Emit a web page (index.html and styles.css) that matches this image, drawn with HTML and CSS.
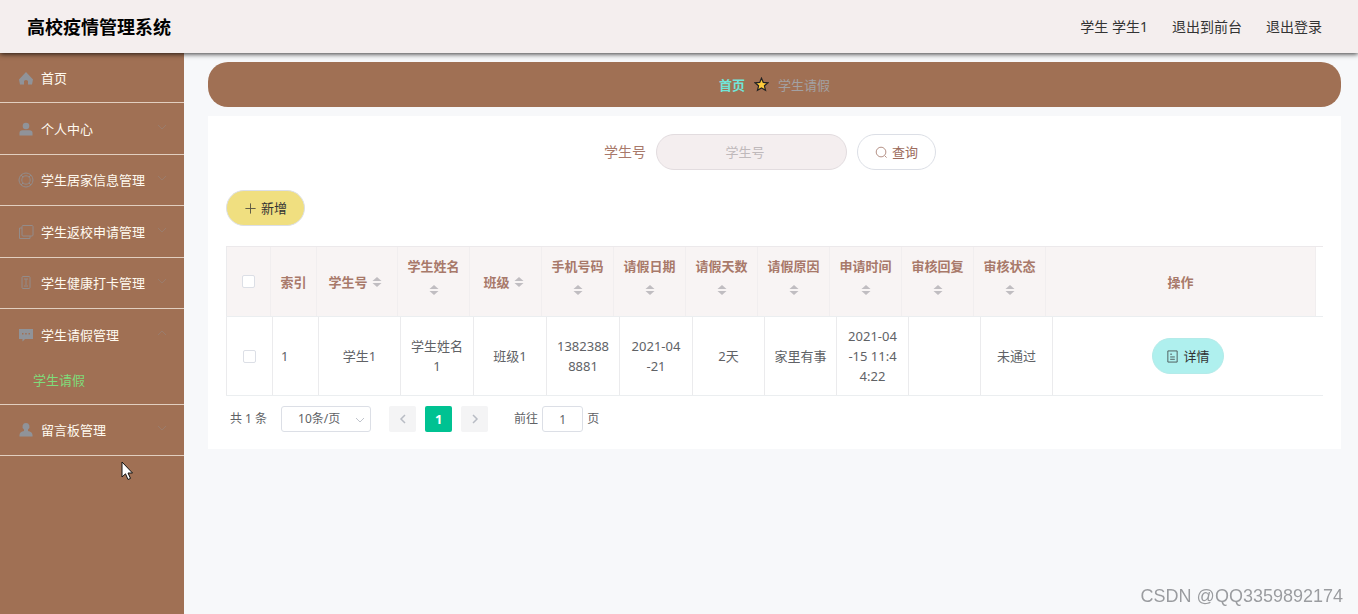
FILE: index.html
```html
<!DOCTYPE html>
<html lang="zh-CN">
<head>
<meta charset="utf-8">
<meta name="viewport" content="width=device-width, initial-scale=1">
<title>高校疫情管理系统</title>
<link rel="stylesheet" href="styles.css">
</head>
<body>
<svg class="defs" aria-hidden="true">
  <symbol id="down" viewBox="0 0 12 12"><path d="M2 4l4 4 4-4" fill="none" stroke="currentColor"/></symbol>
  <symbol id="user" viewBox="0 0 16 16"><circle cx="8" cy="5" r="3.300"/><path d="M1.500 14.500v-2.500q0-2.800 3-2.800h7q3 0 3 2.800v2.500z"/></symbol>
  <symbol id="sort" viewBox="0 0 10 12"><path d="M5 1l4.500 4h-9zM5 11L.5 7h9z" fill="currentColor"/></symbol>
</svg>
<header class="topbar">
  <h1 class="brand">高校疫情管理系统</h1>
  <nav class="account">
    <span>学生 学生1</span>
    <a href="#front">退出到前台</a>
    <a href="#logout">退出登录</a>
  </nav>
</header>
<div class="layout">
  <aside class="sidebar">
    <ul class="menu">
      <li><a class="menu-link" href="#home"><svg class="menu-icon" viewBox="0 0 16 16"><path d="M8 2L1 9.500 2 14.500h4V11q2-2 4 0v3.500h4l1-5z"/></svg>首页</a></li>
      <li><a class="menu-link" href="#me"><svg class="menu-icon"><use href="#user"/></svg>个人中心<svg class="arrow"><use href="#down"/></svg></a></li>
      <li><a class="menu-link" href="#family"><svg class="menu-icon line" viewBox="0 0 16 16"><circle cx="8" cy="8" r="7"/><circle cx="8" cy="8" r="4.200"/><path d="M3 3l2 2M13 3l-2 2M3 13l2-2M13 13l-2-2"/></svg>学生居家信息管理<svg class="arrow"><use href="#down"/></svg></a></li>
      <li><a class="menu-link" href="#return"><svg class="menu-icon line" viewBox="0 0 16 16"><rect x="4" y="1.500" width="11" height="10.500" rx="1"/><path d="M4 4H1.500v10.500H12V12"/></svg>学生返校申请管理<svg class="arrow"><use href="#down"/></svg></a></li>
      <li><a class="menu-link" href="#health"><svg class="menu-icon line" viewBox="0 0 16 16"><rect x="4" y="1.500" width="8" height="12" rx="1"/><path d="M6 4h4M8 4v6M6 11h4"/></svg>学生健康打卡管理<svg class="arrow"><use href="#down"/></svg></a></li>
      <li><a class="menu-link" href="#leave"><svg class="menu-icon" viewBox="0 0 16 16"><path d="M1 2h14v10H7l-2.500 2.500V12H1zM4 6v1.500h1.500V6zM7.200 6v1.500h1.500V6zM10.500 6v1.500H12V6z" fill-rule="evenodd"/></svg>学生请假管理<svg class="arrow open"><use href="#down"/></svg></a>
        <a class="submenu-link" href="#leave-list">学生请假</a></li>
      <li><a class="menu-link" href="#board"><svg class="menu-icon" viewBox="0 0 16 16"><path d="M8 1a3.500 3.500 0 0 1 2 6.400V9c2.500.6 4.500 1.500 4.500 4v1.500h-13V13c0-2.500 2-3.400 4.500-4V7.400A3.500 3.500 0 0 1 8 1z"/></svg>留言板管理<svg class="arrow"><use href="#down"/></svg></a></li>
    </ul>
  </aside>
  <main class="content">
    <nav class="breadcrumb" aria-label="breadcrumb">
      <a href="#home">首页</a>
      <svg class="star" viewBox="0 0 16 16"><path d="M8 1.300l1.900 4.500 4.900.4-3.700 3.200 1.200 4.800L8 11.600l-4.300 2.600 1.200-4.800L1.200 6.200l4.900-.4z"/></svg>
      <span>学生请假</span>
    </nav>
    <section class="card">
      <form class="search">
        <label for="number">学生号</label>
        <input class="search-input" id="number" type="text" placeholder="学生号">
        <button class="button" type="button"><svg class="button-icon" viewBox="0 0 14 14"><circle cx="6.500" cy="6.500" r="5.200"/><path d="M10.500 10.500l2 2"/></svg>查询</button>
      </form>
      <div class="actions">
        <button class="button add" type="button"><svg class="button-icon" viewBox="0 0 14 14"><path d="M7 1.500v11M1.500 7h11"/></svg>新增</button>
      </div>
      <table class="records">
        <thead>
          <tr>
            <th><input class="check" type="checkbox" aria-label="全选"></th>
            <th>索引</th>
            <th>学生号<svg class="sort"><use href="#sort"/></svg></th>
            <th class="stacked">学生姓名<svg class="sort"><use href="#sort"/></svg></th>
            <th>班级<svg class="sort"><use href="#sort"/></svg></th>
            <th class="stacked">手机号码<svg class="sort"><use href="#sort"/></svg></th>
            <th class="stacked">请假日期<svg class="sort"><use href="#sort"/></svg></th>
            <th class="stacked">请假天数<svg class="sort"><use href="#sort"/></svg></th>
            <th class="stacked">请假原因<svg class="sort"><use href="#sort"/></svg></th>
            <th class="stacked">申请时间<svg class="sort"><use href="#sort"/></svg></th>
            <th class="stacked">审核回复<svg class="sort"><use href="#sort"/></svg></th>
            <th class="stacked">审核状态<svg class="sort"><use href="#sort"/></svg></th>
            <th>操作</th>
          </tr>
        </thead>
        <tbody>
          <tr>
            <td><input class="check" type="checkbox" aria-label="选择第1行"></td>
            <td class="index">1</td>
            <td>学生1</td>
            <td>学生姓名<br>1</td>
            <td>班级1</td>
            <td>1382388<br>8881</td>
            <td>2021-04<br>-21</td>
            <td>2天</td>
            <td>家里有事</td>
            <td>2021-04<br>-15 11:4<br>4:22</td>
            <td></td>
            <td>未通过</td>
            <td><button class="button detail" type="button"><svg class="button-icon" viewBox="0 0 14 14"><path d="M2 1h10v12H2zM4.500 4.500h2M4.500 7.500h5M4.500 10h5"/></svg>详情</button></td>
          </tr>
        </tbody>
      </table>
      <div class="pagination">
        <span>共 1 条</span>
        <span class="size">
          <select class="size-select" aria-label="每页条数"><option>10条/页</option></select>
          <svg class="size-arrow"><use href="#down"/></svg>
        </span>
        <div class="pages">
          <button class="page" type="button" aria-label="上一页"><svg class="page-icon prev"><use href="#down"/></svg></button>
          <button class="page current" type="button">1</button>
          <button class="page" type="button" aria-label="下一页"><svg class="page-icon next"><use href="#down"/></svg></button>
        </div>
        <div class="jump"><label for="page">前往</label><input class="jump-input" id="page" type="text" value="1"><span>页</span></div>
      </div>
    </section>
  </main>
</div>
<svg class="cursor" viewBox="0 0 12 20" aria-hidden="true"><path d="M1 1v15l3.500-3.200L7 18.500l2.500-1.100L7 12h4.500z"/></svg>
<div class="watermark">CSDN @QQ3359892174</div>
</body>
</html>
```

FILE: styles.css
```css
* { box-sizing: border-box; }

body {
  margin: 0;
  min-height: 100vh;
  display: flex;
  flex-direction: column;
  background: #f7f8fa;
  color: #606266;
  font: 13px/20px "Noto Sans", "Noto Sans CJK SC", sans-serif;
}

a { color: inherit; text-decoration: none; }
button, input, select { font: inherit; color: inherit; margin: 0; }
.defs { position: absolute; width: 0; height: 0; }

.topbar {
  position: relative;
  z-index: 1;
  display: flex;
  align-items: center;
  justify-content: space-between;
  height: 53px;
  padding: 0 36px 0 27px;
  background: #f4eeee;
  box-shadow: 0 1px 5px rgba(0, 0, 0, 0.8);
}
.brand { margin: 0; color: #000; font-size: 18px; font-weight: 700; }
.account { display: flex; gap: 24px; color: #333; font-size: 14px; }

.layout { flex: 1; display: flex; }
.sidebar { flex: 0 0 184px; background: #a07054; }
.menu { margin: 0; padding: 0; list-style: none; color: #fffaf0; }
.menu li { border-bottom: 1px solid #e2cfc0; }
.menu-link { display: flex; align-items: center; height: 50px; padding: 0 16px 0 18px; }
.menu li:first-child .menu-link { height: 49px; }
.menu li:nth-child(even) .menu-link { height: 51px; }
.menu-icon { width: 16px; height: 16px; margin-right: 7px; fill: #909399; }
.menu-icon.line { fill: none; stroke: #909399; opacity: 0.8; }
.arrow { width: 12px; height: 12px; margin: 0 0 4px auto; color: #909399; opacity: 0.35; }
.arrow.open { transform: rotate(180deg); }
.submenu-link { display: block; padding: 10px 33px 14px; color: #7fdc7a; }

.content { flex: 1; min-width: 0; padding: 9px 17px 0 24px; }
.breadcrumb {
  display: flex;
  align-items: center;
  justify-content: center;
  gap: 9px;
  height: 45px;
  margin-bottom: 9px;
  border-radius: 20px;
  background: #a07054;
  color: #a3a1a3;
}
.breadcrumb a { color: #71e5d8; font-weight: 700; }
.star { width: 15px; height: 15px; fill: #fdcb3c; stroke: #222; stroke-width: 1.3; }

.card { padding: 18px 18px 17px; background: #fff; }
.search { display: flex; align-items: center; justify-content: center; gap: 10px; padding-right: 9px; }
.search label { color: #a8796a; font-size: 14px; }
.search-input {
  width: 191px;
  height: 36px;
  padding: 0 28px 0 15px;
  border: 1px solid #e2dcdf;
  border-radius: 18px;
  background: #f4eeef;
  text-align: center;
}
.search-input::placeholder { color: #bfb9bb; opacity: 1; }
.button {
  display: inline-flex;
  align-items: center;
  justify-content: center;
  gap: 4px;
  height: 36px;
  padding: 0 17px;
  border: 1px solid #dcdfe6;
  border-radius: 18px;
  background: #fff;
  color: #9c6b5c;
}
.button-icon { width: 13px; height: 13px; fill: none; stroke: currentColor; opacity: 0.8; }
.actions { margin: 20px 0; display: flex; }
.add { background: #f0df80; color: #333; }
.detail { padding: 0 13px; border-color: #b4ebe9; background: #aff0ee; color: #333; }

.records { display: block; border-top: 1px solid #ece9eb; }
.records thead, .records tbody { display: block; border-bottom: 1px solid #ebeef0; }
.records tr { display: grid; border-left: 1px solid #ebebed; }
.records thead { padding-right: 7px; }
.records thead tr { grid-template-columns: 44fr 46fr 81fr repeat(9, 72fr) 270fr; }
.records tbody tr { grid-template-columns: 46fr 46fr 82fr repeat(4, 73fr) repeat(5, 72fr) 270fr; }
.records th, .records td {
  display: flex;
  align-items: center;
  justify-content: center;
  min-width: 0;
  padding: 8px;
  border-right: 1px solid #ebebed;
  text-align: center;
}
.records th {
  flex-wrap: wrap;
  align-content: center;
  min-height: 69px;
  padding: 8px 4px;
  border-color: #f1eeef;
  background: #f8f4f4;
  color: #a8796a;
  line-height: 24px;
}
.records .stacked { padding: 4px 4px 12px; }
.records td { min-height: 78px; }
.records td:last-child { border-right: 0; }
.records .index { justify-content: flex-start; }
.sort { flex: 0 0 10px; height: 12px; margin: 6px 4px; color: #c0bdc1; }
.check {
  appearance: none;
  width: 13px;
  height: 13px;
  border: 1px solid #dcdfe6;
  border-radius: 2px;
  background: #fff;
}

.pagination { display: flex; align-items: center; padding: 10px 4px 0; font-size: 12px; }
.size { position: relative; margin: 0 18px 0 14px; }
.size-select {
  display: block;
  appearance: none;
  width: 90px;
  height: 26px;
  padding: 0 16px;
  border: 1px solid #dcdfe6;
  border-radius: 3px;
  background: #fff;
}
.size-arrow { position: absolute; right: 5px; top: 8px; width: 12px; height: 12px; color: #c0c4cc; }
.pages { display: flex; gap: 9px; }
.page {
  display: flex;
  align-items: center;
  justify-content: center;
  width: 27px;
  height: 26px;
  padding: 0;
  border: 0;
  border-radius: 2px;
  background: #f4f4f5;
  color: #b8bcc4;
}
.page.current { background: #00c292; color: #fff; font-size: 13px; font-weight: 700; }
.page-icon { width: 12px; height: 12px; stroke-width: 1.5; }
.prev { transform: rotate(90deg); }
.next { transform: rotate(-90deg); }
.jump { display: flex; align-items: center; gap: 4px; margin-left: 26px; }
.jump-input {
  width: 41px;
  height: 26px;
  padding: 0;
  border: 1px solid #dcdfe6;
  border-radius: 3px;
  text-align: center;
}

.cursor { position: absolute; left: 121px; top: 461px; width: 12px; height: 20px; fill: #fff; stroke: #111; }
.watermark {
  position: fixed;
  right: 15px;
  bottom: 8px;
  color: #9a9ca0;
  font: 18px/20px "Liberation Sans", sans-serif;
  text-shadow: 0 0 1px #fff;
}
```
